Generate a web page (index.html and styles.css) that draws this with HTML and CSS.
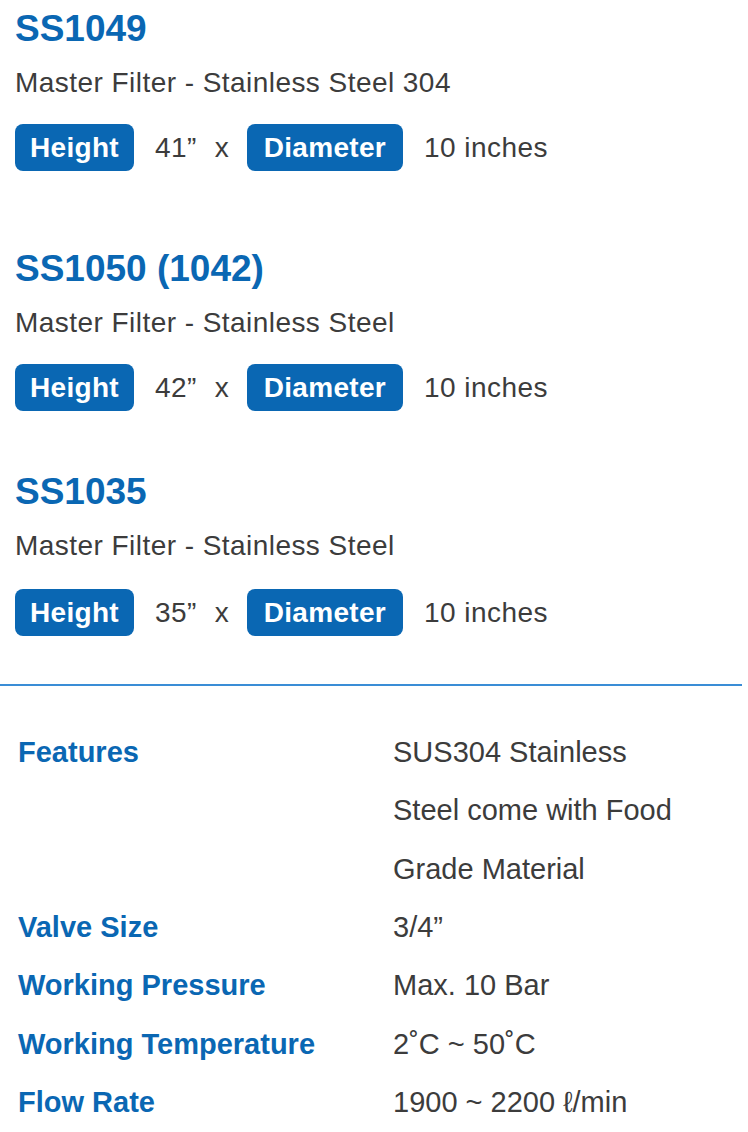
FILE: index.html
```html
<!DOCTYPE html>
<html lang="en">
<head>
<meta charset="utf-8">
<title>Master Filter</title>
<link rel="stylesheet" href="styles.css">
</head>
<body>
<main class="page">
  <section class="products">
    <article class="product product--first">
      <h2 class="title">SS1049</h2>
      <p class="subtitle">Master Filter - Stainless Steel 304</p>
      <div class="specs">
        <span class="badge">Height</span>
        <span class="dim">41”</span>
        <span class="times">x</span>
        <span class="badge badge--wide">Diameter</span>
        <span class="dim">10 inches</span>
      </div>
    </article>
    <article class="product product--second">
      <h2 class="title">SS1050 (1042)</h2>
      <p class="subtitle">Master Filter - Stainless Steel</p>
      <div class="specs">
        <span class="badge">Height</span>
        <span class="dim">42”</span>
        <span class="times">x</span>
        <span class="badge badge--wide">Diameter</span>
        <span class="dim">10 inches</span>
      </div>
    </article>
    <article class="product product--third">
      <h2 class="title">SS1035</h2>
      <p class="subtitle">Master Filter - Stainless Steel</p>
      <div class="specs">
        <span class="badge">Height</span>
        <span class="dim">35”</span>
        <span class="times">x</span>
        <span class="badge badge--wide">Diameter</span>
        <span class="dim">10 inches</span>
      </div>
    </article>
  </section>
  <hr class="divider">
  <dl class="features">
    <dt class="label">Features</dt>
    <dd class="value">SUS304 Stainless Steel come with Food Grade Material</dd>
    <dt class="label">Valve Size</dt>
    <dd class="value">3/4”</dd>
    <dt class="label">Working Pressure</dt>
    <dd class="value">Max. 10 Bar</dd>
    <dt class="label">Working Temperature</dt>
    <dd class="value">2˚C ~ 50˚C</dd>
    <dt class="label">Flow Rate</dt>
    <dd class="value">1900 ~ 2200 ℓ/min</dd>
  </dl>
</main>
</body>
</html>
```
FILE: styles.css
```css
html, body {
  margin: 0;
  padding: 0;
  background: #ffffff;
}

body {
  font-family: "Liberation Sans", Arial, sans-serif;
  color: #3c3c3c;
}

.page {
  width: 742px;
}

.products {
  padding-left: 15px;
}

.product {
  margin: 0;
}

.product--first {
  padding-top: 7px;
}

.product--second {
  padding-top: 76px;
}

.product--third {
  padding-top: 59px;
}

.title {
  margin: 0;
  font-size: 37px;
  line-height: 44px;
  font-weight: 700;
  color: #0a67b3;
}

.subtitle {
  margin: 14px 0 0;
  font-size: 28px;
  line-height: 36px;
  letter-spacing: 0.45px;
}

.specs {
  margin-top: 23px;
  display: flex;
  align-items: center;
  height: 47px;
}

.product--third .specs {
  margin-top: 25px;
}

.badge {
  display: inline-block;
  height: 47px;
  line-height: 47px;
  padding: 0 15px;
  border-radius: 8px;
  background: #0a67b3;
  color: #ffffff;
  font-size: 28px;
  font-weight: 700;
  letter-spacing: 0.3px;
}

.badge--wide {
  padding: 0 17px;
}

.dim {
  margin-left: 21px;
  font-size: 28px;
  letter-spacing: 0.45px;
}

.times {
  margin: 0 18px;
  font-size: 28px;
}

.divider {
  margin: 48px 0 0;
  width: 742px;
  height: 2px;
  border: 0;
  background: #3a8dd6;
}

.features {
  margin: 37px 0 0;
  padding-left: 18px;
  display: grid;
  grid-template-columns: 375px 300px;
  font-size: 29px;
  line-height: 58.33px;
}

.label {
  grid-column: 1;
  margin: 0;
  font-weight: 700;
  color: #0a67b3;
}

.value {
  grid-column: 2;
  margin: 0;
  color: #3c3c3c;
}
```
